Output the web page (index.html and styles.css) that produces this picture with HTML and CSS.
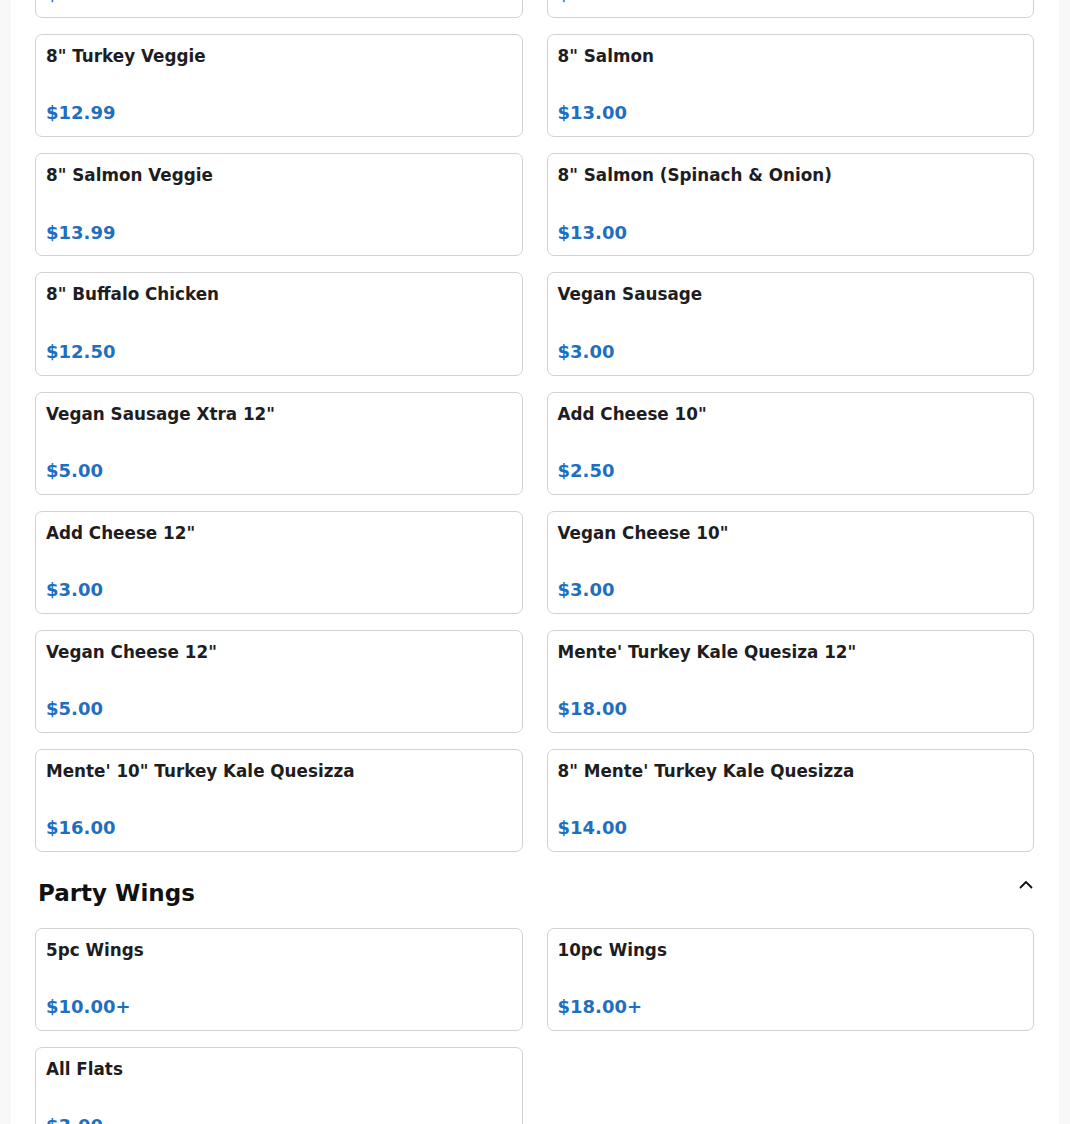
FILE: index.html
```html
<!DOCTYPE html>
<html lang="en">
<head>
<meta charset="utf-8">
<title>Menu</title>
<link rel="stylesheet" href="styles.css">
</head>
<body>
<main class="page">
  <section class="section section-first">
    <div class="grid">
      <div class="card"><div class="name">8" Turkey</div><div class="price">$12.00</div></div>
      <div class="card"><div class="name">8" Chicken</div><div class="price">$12.00</div></div>
      <div class="card"><div class="name">8" Turkey Veggie</div><div class="price">$12.99</div></div>
      <div class="card"><div class="name">8" Salmon</div><div class="price">$13.00</div></div>
      <div class="card"><div class="name">8" Salmon Veggie</div><div class="price">$13.99</div></div>
      <div class="card"><div class="name">8" Salmon (Spinach &amp; Onion)</div><div class="price">$13.00</div></div>
      <div class="card"><div class="name">8" Buffalo Chicken</div><div class="price">$12.50</div></div>
      <div class="card"><div class="name">Vegan Sausage</div><div class="price">$3.00</div></div>
      <div class="card"><div class="name">Vegan Sausage Xtra 12"</div><div class="price">$5.00</div></div>
      <div class="card"><div class="name">Add Cheese 10"</div><div class="price">$2.50</div></div>
      <div class="card"><div class="name">Add Cheese 12"</div><div class="price">$3.00</div></div>
      <div class="card"><div class="name">Vegan Cheese 10"</div><div class="price">$3.00</div></div>
      <div class="card"><div class="name">Vegan Cheese 12"</div><div class="price">$5.00</div></div>
      <div class="card"><div class="name">Mente' Turkey Kale Quesiza 12"</div><div class="price">$18.00</div></div>
      <div class="card"><div class="name">Mente' 10" Turkey Kale Quesizza</div><div class="price">$16.00</div></div>
      <div class="card"><div class="name">8" Mente' Turkey Kale Quesizza</div><div class="price">$14.00</div></div>
    </div>
  </section>
  <section class="section">
    <div class="section-head">
      <h2 class="section-title">Party Wings</h2>
      <svg class="chevron" width="16" height="16" viewBox="0 0 16 16" aria-hidden="true"><polyline points="2.5,10.5 8,5 13.5,10.5" fill="none" stroke="#111" stroke-width="1.8" stroke-linecap="round" stroke-linejoin="round"/></svg>
    </div>
    <div class="grid">
      <div class="card"><div class="name">5pc Wings</div><div class="price">$10.00+</div></div>
      <div class="card"><div class="name">10pc Wings</div><div class="price">$18.00+</div></div>
      <div class="card"><div class="name">All Flats</div><div class="price">$3.00</div></div>
    </div>
  </section>
</main>
</body>
</html>
```
FILE: styles.css
```css
html, body {
  margin: 0;
  padding: 0;
}
body {
  background: #f8f8f8;
  font-family: "DejaVu Sans", "Liberation Sans", sans-serif;
  color: #1d1d22;
}
.page {
  background: #ffffff;
  margin: 0 11px;
  padding: 0 25px 40px 24px;
  min-height: 1300px;
}
.section-first {
  margin-top: -85px;
}
.grid {
  display: grid;
  grid-template-columns: 1fr 1fr;
  column-gap: 24px;
  row-gap: 16px;
}
.card {
  border: 1px solid #d2d2d2;
  border-radius: 7px;
  padding: 11px 10px 9.9px;
  background: #fff;
}
.name {
  font-size: 16.8px;
  font-weight: bold;
  line-height: 1.2;
  color: #1d1d22;
}
.price {
  margin-top: 33.1px;
  font-size: 18px;
  font-weight: bold;
  line-height: 1.5;
  color: #1f6fc0;
}
.section-head {
  display: flex;
  justify-content: space-between;
  align-items: flex-start;
  margin: 28px 0 20px;
  padding: 0 0 0 3px;
}
.section-title {
  margin: 0;
  font-size: 23px;
  line-height: 1.2;
  font-weight: bold;
  color: #111;
}
.chevron {
  display: block;
  margin-top: -3px;
}
```
